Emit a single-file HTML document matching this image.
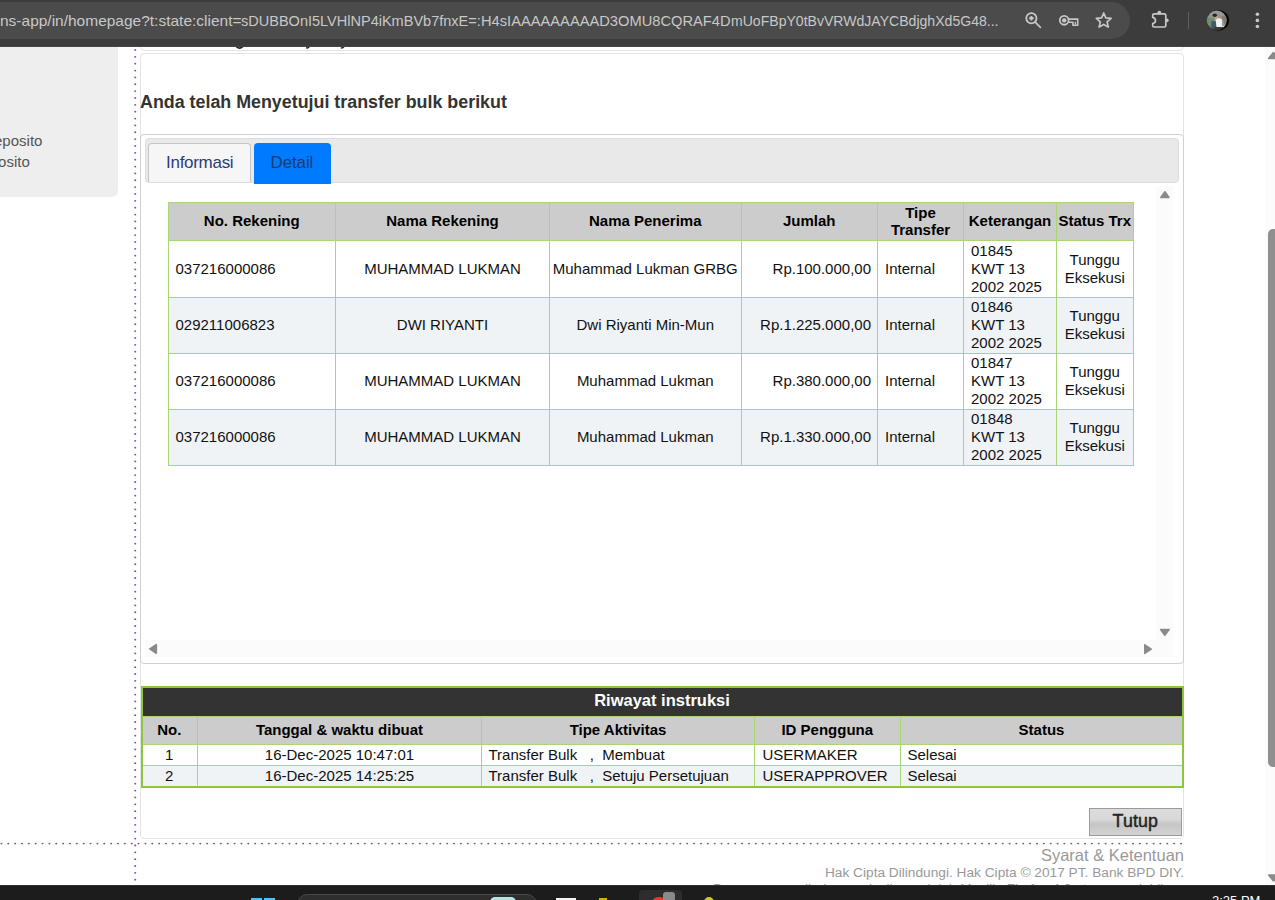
<!DOCTYPE html><html><head><meta charset="utf-8"><style>
*{box-sizing:border-box;margin:0;padding:0}
html,body{width:1275px;height:900px;overflow:hidden;background:#fff;font-family:"Liberation Sans", sans-serif;}
.a{position:absolute}
.t{position:absolute;white-space:pre;font-family:"Liberation Sans", sans-serif;}
.cell{position:absolute;display:flex;align-items:center;white-space:pre;font-size:15px;color:#111;line-height:17.7px}
.hc{font-weight:bold;justify-content:center;text-align:center;color:#000}
.cc{justify-content:center;text-align:center}
.rc{justify-content:flex-end;text-align:right}
</style></head><body>
<div class="a" style="left:0;top:0;width:118px;height:197px;background:#eeeeee;border-bottom-right-radius:6px"></div>
<div class="t" style="right:1232.6px;top:131.5px;font-size:15px;color:#555">eposito</div>
<div class="t" style="right:1245.2px;top:153.3px;font-size:15px;color:#555">posito</div>
<svg class="a" style="left:0;top:0" width="1275" height="900"><g fill="#86519a" rx="1" ry="0.8"><ellipse cx="135.2" cy="49.96" rx="1.05" ry="0.9"/><ellipse cx="135.2" cy="56.82" rx="1.05" ry="0.9"/><ellipse cx="135.2" cy="63.67" rx="1.05" ry="0.9"/><ellipse cx="135.2" cy="70.53" rx="1.05" ry="0.9"/><ellipse cx="135.2" cy="77.39" rx="1.05" ry="0.9"/><ellipse cx="135.2" cy="84.25" rx="1.05" ry="0.9"/><ellipse cx="135.2" cy="91.10" rx="1.05" ry="0.9"/><ellipse cx="135.2" cy="97.96" rx="1.05" ry="0.9"/><ellipse cx="135.2" cy="104.82" rx="1.05" ry="0.9"/><ellipse cx="135.2" cy="111.68" rx="1.05" ry="0.9"/><ellipse cx="135.2" cy="118.53" rx="1.05" ry="0.9"/><ellipse cx="135.2" cy="125.39" rx="1.05" ry="0.9"/><ellipse cx="135.2" cy="132.25" rx="1.05" ry="0.9"/><ellipse cx="135.2" cy="139.11" rx="1.05" ry="0.9"/><ellipse cx="135.2" cy="145.97" rx="1.05" ry="0.9"/><ellipse cx="135.2" cy="152.82" rx="1.05" ry="0.9"/><ellipse cx="135.2" cy="159.68" rx="1.05" ry="0.9"/><ellipse cx="135.2" cy="166.54" rx="1.05" ry="0.9"/><ellipse cx="135.2" cy="173.40" rx="1.05" ry="0.9"/><ellipse cx="135.2" cy="180.25" rx="1.05" ry="0.9"/><ellipse cx="135.2" cy="187.11" rx="1.05" ry="0.9"/><ellipse cx="135.2" cy="193.97" rx="1.05" ry="0.9"/><ellipse cx="135.2" cy="200.83" rx="1.05" ry="0.9"/><ellipse cx="135.2" cy="207.68" rx="1.05" ry="0.9"/><ellipse cx="135.2" cy="214.54" rx="1.05" ry="0.9"/><ellipse cx="135.2" cy="221.40" rx="1.05" ry="0.9"/><ellipse cx="135.2" cy="228.25" rx="1.05" ry="0.9"/><ellipse cx="135.2" cy="235.11" rx="1.05" ry="0.9"/><ellipse cx="135.2" cy="241.97" rx="1.05" ry="0.9"/><ellipse cx="135.2" cy="248.83" rx="1.05" ry="0.9"/><ellipse cx="135.2" cy="255.69" rx="1.05" ry="0.9"/><ellipse cx="135.2" cy="262.54" rx="1.05" ry="0.9"/><ellipse cx="135.2" cy="269.40" rx="1.05" ry="0.9"/><ellipse cx="135.2" cy="276.26" rx="1.05" ry="0.9"/><ellipse cx="135.2" cy="283.12" rx="1.05" ry="0.9"/><ellipse cx="135.2" cy="289.97" rx="1.05" ry="0.9"/><ellipse cx="135.2" cy="296.83" rx="1.05" ry="0.9"/><ellipse cx="135.2" cy="303.69" rx="1.05" ry="0.9"/><ellipse cx="135.2" cy="310.54" rx="1.05" ry="0.9"/><ellipse cx="135.2" cy="317.40" rx="1.05" ry="0.9"/><ellipse cx="135.2" cy="324.26" rx="1.05" ry="0.9"/><ellipse cx="135.2" cy="331.12" rx="1.05" ry="0.9"/><ellipse cx="135.2" cy="337.97" rx="1.05" ry="0.9"/><ellipse cx="135.2" cy="344.83" rx="1.05" ry="0.9"/><ellipse cx="135.2" cy="351.69" rx="1.05" ry="0.9"/><ellipse cx="135.2" cy="358.55" rx="1.05" ry="0.9"/><ellipse cx="135.2" cy="365.40" rx="1.05" ry="0.9"/><ellipse cx="135.2" cy="372.26" rx="1.05" ry="0.9"/><ellipse cx="135.2" cy="379.12" rx="1.05" ry="0.9"/><ellipse cx="135.2" cy="385.98" rx="1.05" ry="0.9"/><ellipse cx="135.2" cy="392.83" rx="1.05" ry="0.9"/><ellipse cx="135.2" cy="399.69" rx="1.05" ry="0.9"/><ellipse cx="135.2" cy="406.55" rx="1.05" ry="0.9"/><ellipse cx="135.2" cy="413.41" rx="1.05" ry="0.9"/><ellipse cx="135.2" cy="420.26" rx="1.05" ry="0.9"/><ellipse cx="135.2" cy="427.12" rx="1.05" ry="0.9"/><ellipse cx="135.2" cy="433.98" rx="1.05" ry="0.9"/><ellipse cx="135.2" cy="440.84" rx="1.05" ry="0.9"/><ellipse cx="135.2" cy="447.69" rx="1.05" ry="0.9"/><ellipse cx="135.2" cy="454.55" rx="1.05" ry="0.9"/><ellipse cx="135.2" cy="461.41" rx="1.05" ry="0.9"/><ellipse cx="135.2" cy="468.27" rx="1.05" ry="0.9"/><ellipse cx="135.2" cy="475.12" rx="1.05" ry="0.9"/><ellipse cx="135.2" cy="481.98" rx="1.05" ry="0.9"/><ellipse cx="135.2" cy="488.84" rx="1.05" ry="0.9"/><ellipse cx="135.2" cy="495.70" rx="1.05" ry="0.9"/><ellipse cx="135.2" cy="502.55" rx="1.05" ry="0.9"/><ellipse cx="135.2" cy="509.41" rx="1.05" ry="0.9"/><ellipse cx="135.2" cy="516.27" rx="1.05" ry="0.9"/><ellipse cx="135.2" cy="523.13" rx="1.05" ry="0.9"/><ellipse cx="135.2" cy="529.99" rx="1.05" ry="0.9"/><ellipse cx="135.2" cy="536.84" rx="1.05" ry="0.9"/><ellipse cx="135.2" cy="543.70" rx="1.05" ry="0.9"/><ellipse cx="135.2" cy="550.56" rx="1.05" ry="0.9"/><ellipse cx="135.2" cy="557.41" rx="1.05" ry="0.9"/><ellipse cx="135.2" cy="564.27" rx="1.05" ry="0.9"/><ellipse cx="135.2" cy="571.13" rx="1.05" ry="0.9"/><ellipse cx="135.2" cy="577.99" rx="1.05" ry="0.9"/><ellipse cx="135.2" cy="584.85" rx="1.05" ry="0.9"/><ellipse cx="135.2" cy="591.70" rx="1.05" ry="0.9"/><ellipse cx="135.2" cy="598.56" rx="1.05" ry="0.9"/><ellipse cx="135.2" cy="605.42" rx="1.05" ry="0.9"/><ellipse cx="135.2" cy="612.27" rx="1.05" ry="0.9"/><ellipse cx="135.2" cy="619.13" rx="1.05" ry="0.9"/><ellipse cx="135.2" cy="625.99" rx="1.05" ry="0.9"/><ellipse cx="135.2" cy="632.85" rx="1.05" ry="0.9"/><ellipse cx="135.2" cy="639.71" rx="1.05" ry="0.9"/><ellipse cx="135.2" cy="646.56" rx="1.05" ry="0.9"/><ellipse cx="135.2" cy="653.42" rx="1.05" ry="0.9"/><ellipse cx="135.2" cy="660.28" rx="1.05" ry="0.9"/><ellipse cx="135.2" cy="667.13" rx="1.05" ry="0.9"/><ellipse cx="135.2" cy="673.99" rx="1.05" ry="0.9"/><ellipse cx="135.2" cy="680.85" rx="1.05" ry="0.9"/><ellipse cx="135.2" cy="687.71" rx="1.05" ry="0.9"/><ellipse cx="135.2" cy="694.57" rx="1.05" ry="0.9"/><ellipse cx="135.2" cy="701.42" rx="1.05" ry="0.9"/><ellipse cx="135.2" cy="708.28" rx="1.05" ry="0.9"/><ellipse cx="135.2" cy="715.14" rx="1.05" ry="0.9"/><ellipse cx="135.2" cy="722.00" rx="1.05" ry="0.9"/><ellipse cx="135.2" cy="728.85" rx="1.05" ry="0.9"/><ellipse cx="135.2" cy="735.71" rx="1.05" ry="0.9"/><ellipse cx="135.2" cy="742.57" rx="1.05" ry="0.9"/><ellipse cx="135.2" cy="749.43" rx="1.05" ry="0.9"/><ellipse cx="135.2" cy="756.28" rx="1.05" ry="0.9"/><ellipse cx="135.2" cy="763.14" rx="1.05" ry="0.9"/><ellipse cx="135.2" cy="770.00" rx="1.05" ry="0.9"/><ellipse cx="135.2" cy="776.86" rx="1.05" ry="0.9"/><ellipse cx="135.2" cy="783.71" rx="1.05" ry="0.9"/><ellipse cx="135.2" cy="790.57" rx="1.05" ry="0.9"/><ellipse cx="135.2" cy="797.43" rx="1.05" ry="0.9"/><ellipse cx="135.2" cy="804.29" rx="1.05" ry="0.9"/><ellipse cx="135.2" cy="811.14" rx="1.05" ry="0.9"/><ellipse cx="135.2" cy="818.00" rx="1.05" ry="0.9"/><ellipse cx="135.2" cy="824.86" rx="1.05" ry="0.9"/><ellipse cx="135.2" cy="831.72" rx="1.05" ry="0.9"/><ellipse cx="135.2" cy="838.57" rx="1.05" ry="0.9"/><ellipse cx="135.2" cy="845.43" rx="1.05" ry="0.9"/><ellipse cx="135.2" cy="852.29" rx="1.05" ry="0.9"/><ellipse cx="135.2" cy="859.14" rx="1.05" ry="0.9"/><ellipse cx="135.2" cy="866.00" rx="1.05" ry="0.9"/><ellipse cx="135.2" cy="872.86" rx="1.05" ry="0.9"/><ellipse cx="135.2" cy="879.72" rx="1.05" ry="0.9"/><ellipse cx="1.41" cy="843.6" rx="1.1" ry="0.8"/><ellipse cx="8.27" cy="843.6" rx="1.1" ry="0.8"/><ellipse cx="15.13" cy="843.6" rx="1.1" ry="0.8"/><ellipse cx="21.98" cy="843.6" rx="1.1" ry="0.8"/><ellipse cx="28.84" cy="843.6" rx="1.1" ry="0.8"/><ellipse cx="35.70" cy="843.6" rx="1.1" ry="0.8"/><ellipse cx="42.56" cy="843.6" rx="1.1" ry="0.8"/><ellipse cx="49.42" cy="843.6" rx="1.1" ry="0.8"/><ellipse cx="56.27" cy="843.6" rx="1.1" ry="0.8"/><ellipse cx="63.13" cy="843.6" rx="1.1" ry="0.8"/><ellipse cx="69.99" cy="843.6" rx="1.1" ry="0.8"/><ellipse cx="76.85" cy="843.6" rx="1.1" ry="0.8"/><ellipse cx="83.71" cy="843.6" rx="1.1" ry="0.8"/><ellipse cx="90.56" cy="843.6" rx="1.1" ry="0.8"/><ellipse cx="97.42" cy="843.6" rx="1.1" ry="0.8"/><ellipse cx="104.28" cy="843.6" rx="1.1" ry="0.8"/><ellipse cx="111.14" cy="843.6" rx="1.1" ry="0.8"/><ellipse cx="118.00" cy="843.6" rx="1.1" ry="0.8"/><ellipse cx="124.85" cy="843.6" rx="1.1" ry="0.8"/><ellipse cx="131.71" cy="843.6" rx="1.1" ry="0.8"/><ellipse cx="138.57" cy="843.6" rx="1.1" ry="0.8"/><ellipse cx="145.43" cy="843.6" rx="1.1" ry="0.8"/><ellipse cx="152.29" cy="843.6" rx="1.1" ry="0.8"/><ellipse cx="159.14" cy="843.6" rx="1.1" ry="0.8"/><ellipse cx="166.00" cy="843.6" rx="1.1" ry="0.8"/><ellipse cx="172.86" cy="843.6" rx="1.1" ry="0.8"/><ellipse cx="179.72" cy="843.6" rx="1.1" ry="0.8"/><ellipse cx="186.58" cy="843.6" rx="1.1" ry="0.8"/><ellipse cx="193.43" cy="843.6" rx="1.1" ry="0.8"/><ellipse cx="200.29" cy="843.6" rx="1.1" ry="0.8"/><ellipse cx="207.15" cy="843.6" rx="1.1" ry="0.8"/><ellipse cx="214.01" cy="843.6" rx="1.1" ry="0.8"/><ellipse cx="220.87" cy="843.6" rx="1.1" ry="0.8"/><ellipse cx="227.72" cy="843.6" rx="1.1" ry="0.8"/><ellipse cx="234.58" cy="843.6" rx="1.1" ry="0.8"/><ellipse cx="241.44" cy="843.6" rx="1.1" ry="0.8"/><ellipse cx="248.30" cy="843.6" rx="1.1" ry="0.8"/><ellipse cx="255.16" cy="843.6" rx="1.1" ry="0.8"/><ellipse cx="262.01" cy="843.6" rx="1.1" ry="0.8"/><ellipse cx="268.87" cy="843.6" rx="1.1" ry="0.8"/><ellipse cx="275.73" cy="843.6" rx="1.1" ry="0.8"/><ellipse cx="282.59" cy="843.6" rx="1.1" ry="0.8"/><ellipse cx="289.45" cy="843.6" rx="1.1" ry="0.8"/><ellipse cx="296.30" cy="843.6" rx="1.1" ry="0.8"/><ellipse cx="303.16" cy="843.6" rx="1.1" ry="0.8"/><ellipse cx="310.02" cy="843.6" rx="1.1" ry="0.8"/><ellipse cx="316.88" cy="843.6" rx="1.1" ry="0.8"/><ellipse cx="323.74" cy="843.6" rx="1.1" ry="0.8"/><ellipse cx="330.59" cy="843.6" rx="1.1" ry="0.8"/><ellipse cx="337.45" cy="843.6" rx="1.1" ry="0.8"/><ellipse cx="344.31" cy="843.6" rx="1.1" ry="0.8"/><ellipse cx="351.17" cy="843.6" rx="1.1" ry="0.8"/><ellipse cx="358.03" cy="843.6" rx="1.1" ry="0.8"/><ellipse cx="364.88" cy="843.6" rx="1.1" ry="0.8"/><ellipse cx="371.74" cy="843.6" rx="1.1" ry="0.8"/><ellipse cx="378.60" cy="843.6" rx="1.1" ry="0.8"/><ellipse cx="385.46" cy="843.6" rx="1.1" ry="0.8"/><ellipse cx="392.32" cy="843.6" rx="1.1" ry="0.8"/><ellipse cx="399.17" cy="843.6" rx="1.1" ry="0.8"/><ellipse cx="406.03" cy="843.6" rx="1.1" ry="0.8"/><ellipse cx="412.89" cy="843.6" rx="1.1" ry="0.8"/><ellipse cx="419.75" cy="843.6" rx="1.1" ry="0.8"/><ellipse cx="426.61" cy="843.6" rx="1.1" ry="0.8"/><ellipse cx="433.46" cy="843.6" rx="1.1" ry="0.8"/><ellipse cx="440.32" cy="843.6" rx="1.1" ry="0.8"/><ellipse cx="447.18" cy="843.6" rx="1.1" ry="0.8"/><ellipse cx="454.04" cy="843.6" rx="1.1" ry="0.8"/><ellipse cx="460.90" cy="843.6" rx="1.1" ry="0.8"/><ellipse cx="467.75" cy="843.6" rx="1.1" ry="0.8"/><ellipse cx="474.61" cy="843.6" rx="1.1" ry="0.8"/><ellipse cx="481.47" cy="843.6" rx="1.1" ry="0.8"/><ellipse cx="488.33" cy="843.6" rx="1.1" ry="0.8"/><ellipse cx="495.19" cy="843.6" rx="1.1" ry="0.8"/><ellipse cx="502.04" cy="843.6" rx="1.1" ry="0.8"/><ellipse cx="508.90" cy="843.6" rx="1.1" ry="0.8"/><ellipse cx="515.76" cy="843.6" rx="1.1" ry="0.8"/><ellipse cx="522.62" cy="843.6" rx="1.1" ry="0.8"/><ellipse cx="529.48" cy="843.6" rx="1.1" ry="0.8"/><ellipse cx="536.33" cy="843.6" rx="1.1" ry="0.8"/><ellipse cx="543.19" cy="843.6" rx="1.1" ry="0.8"/><ellipse cx="550.05" cy="843.6" rx="1.1" ry="0.8"/><ellipse cx="556.91" cy="843.6" rx="1.1" ry="0.8"/><ellipse cx="563.77" cy="843.6" rx="1.1" ry="0.8"/><ellipse cx="570.62" cy="843.6" rx="1.1" ry="0.8"/><ellipse cx="577.48" cy="843.6" rx="1.1" ry="0.8"/><ellipse cx="584.34" cy="843.6" rx="1.1" ry="0.8"/><ellipse cx="591.20" cy="843.6" rx="1.1" ry="0.8"/><ellipse cx="598.06" cy="843.6" rx="1.1" ry="0.8"/><ellipse cx="604.91" cy="843.6" rx="1.1" ry="0.8"/><ellipse cx="611.77" cy="843.6" rx="1.1" ry="0.8"/><ellipse cx="618.63" cy="843.6" rx="1.1" ry="0.8"/><ellipse cx="625.49" cy="843.6" rx="1.1" ry="0.8"/><ellipse cx="632.35" cy="843.6" rx="1.1" ry="0.8"/><ellipse cx="639.20" cy="843.6" rx="1.1" ry="0.8"/><ellipse cx="646.06" cy="843.6" rx="1.1" ry="0.8"/><ellipse cx="652.92" cy="843.6" rx="1.1" ry="0.8"/><ellipse cx="659.78" cy="843.6" rx="1.1" ry="0.8"/><ellipse cx="666.64" cy="843.6" rx="1.1" ry="0.8"/><ellipse cx="673.49" cy="843.6" rx="1.1" ry="0.8"/><ellipse cx="680.35" cy="843.6" rx="1.1" ry="0.8"/><ellipse cx="687.21" cy="843.6" rx="1.1" ry="0.8"/><ellipse cx="694.07" cy="843.6" rx="1.1" ry="0.8"/><ellipse cx="700.93" cy="843.6" rx="1.1" ry="0.8"/><ellipse cx="707.78" cy="843.6" rx="1.1" ry="0.8"/><ellipse cx="714.64" cy="843.6" rx="1.1" ry="0.8"/><ellipse cx="721.50" cy="843.6" rx="1.1" ry="0.8"/><ellipse cx="728.36" cy="843.6" rx="1.1" ry="0.8"/><ellipse cx="735.22" cy="843.6" rx="1.1" ry="0.8"/><ellipse cx="742.07" cy="843.6" rx="1.1" ry="0.8"/><ellipse cx="748.93" cy="843.6" rx="1.1" ry="0.8"/><ellipse cx="755.79" cy="843.6" rx="1.1" ry="0.8"/><ellipse cx="762.65" cy="843.6" rx="1.1" ry="0.8"/><ellipse cx="769.51" cy="843.6" rx="1.1" ry="0.8"/><ellipse cx="776.36" cy="843.6" rx="1.1" ry="0.8"/><ellipse cx="783.22" cy="843.6" rx="1.1" ry="0.8"/><ellipse cx="790.08" cy="843.6" rx="1.1" ry="0.8"/><ellipse cx="796.94" cy="843.6" rx="1.1" ry="0.8"/><ellipse cx="803.80" cy="843.6" rx="1.1" ry="0.8"/><ellipse cx="810.65" cy="843.6" rx="1.1" ry="0.8"/><ellipse cx="817.51" cy="843.6" rx="1.1" ry="0.8"/><ellipse cx="824.37" cy="843.6" rx="1.1" ry="0.8"/><ellipse cx="831.23" cy="843.6" rx="1.1" ry="0.8"/><ellipse cx="838.09" cy="843.6" rx="1.1" ry="0.8"/><ellipse cx="844.94" cy="843.6" rx="1.1" ry="0.8"/><ellipse cx="851.80" cy="843.6" rx="1.1" ry="0.8"/><ellipse cx="858.66" cy="843.6" rx="1.1" ry="0.8"/><ellipse cx="865.52" cy="843.6" rx="1.1" ry="0.8"/><ellipse cx="872.38" cy="843.6" rx="1.1" ry="0.8"/><ellipse cx="879.23" cy="843.6" rx="1.1" ry="0.8"/><ellipse cx="886.09" cy="843.6" rx="1.1" ry="0.8"/><ellipse cx="892.95" cy="843.6" rx="1.1" ry="0.8"/><ellipse cx="899.81" cy="843.6" rx="1.1" ry="0.8"/><ellipse cx="906.67" cy="843.6" rx="1.1" ry="0.8"/><ellipse cx="913.52" cy="843.6" rx="1.1" ry="0.8"/><ellipse cx="920.38" cy="843.6" rx="1.1" ry="0.8"/><ellipse cx="927.24" cy="843.6" rx="1.1" ry="0.8"/><ellipse cx="934.10" cy="843.6" rx="1.1" ry="0.8"/><ellipse cx="940.96" cy="843.6" rx="1.1" ry="0.8"/><ellipse cx="947.81" cy="843.6" rx="1.1" ry="0.8"/><ellipse cx="954.67" cy="843.6" rx="1.1" ry="0.8"/><ellipse cx="961.53" cy="843.6" rx="1.1" ry="0.8"/><ellipse cx="968.39" cy="843.6" rx="1.1" ry="0.8"/><ellipse cx="975.25" cy="843.6" rx="1.1" ry="0.8"/><ellipse cx="982.10" cy="843.6" rx="1.1" ry="0.8"/><ellipse cx="988.96" cy="843.6" rx="1.1" ry="0.8"/><ellipse cx="995.82" cy="843.6" rx="1.1" ry="0.8"/><ellipse cx="1002.68" cy="843.6" rx="1.1" ry="0.8"/><ellipse cx="1009.54" cy="843.6" rx="1.1" ry="0.8"/><ellipse cx="1016.39" cy="843.6" rx="1.1" ry="0.8"/><ellipse cx="1023.25" cy="843.6" rx="1.1" ry="0.8"/><ellipse cx="1030.11" cy="843.6" rx="1.1" ry="0.8"/><ellipse cx="1036.97" cy="843.6" rx="1.1" ry="0.8"/><ellipse cx="1043.83" cy="843.6" rx="1.1" ry="0.8"/><ellipse cx="1050.68" cy="843.6" rx="1.1" ry="0.8"/><ellipse cx="1057.54" cy="843.6" rx="1.1" ry="0.8"/><ellipse cx="1064.40" cy="843.6" rx="1.1" ry="0.8"/><ellipse cx="1071.26" cy="843.6" rx="1.1" ry="0.8"/><ellipse cx="1078.12" cy="843.6" rx="1.1" ry="0.8"/><ellipse cx="1084.97" cy="843.6" rx="1.1" ry="0.8"/><ellipse cx="1091.83" cy="843.6" rx="1.1" ry="0.8"/><ellipse cx="1098.69" cy="843.6" rx="1.1" ry="0.8"/><ellipse cx="1105.55" cy="843.6" rx="1.1" ry="0.8"/><ellipse cx="1112.41" cy="843.6" rx="1.1" ry="0.8"/><ellipse cx="1119.26" cy="843.6" rx="1.1" ry="0.8"/><ellipse cx="1126.12" cy="843.6" rx="1.1" ry="0.8"/><ellipse cx="1132.98" cy="843.6" rx="1.1" ry="0.8"/><ellipse cx="1139.84" cy="843.6" rx="1.1" ry="0.8"/><ellipse cx="1146.70" cy="843.6" rx="1.1" ry="0.8"/><ellipse cx="1153.55" cy="843.6" rx="1.1" ry="0.8"/><ellipse cx="1160.41" cy="843.6" rx="1.1" ry="0.8"/><ellipse cx="1167.27" cy="843.6" rx="1.1" ry="0.8"/><ellipse cx="1174.13" cy="843.6" rx="1.1" ry="0.8"/><ellipse cx="1180.99" cy="843.6" rx="1.1" ry="0.8"/></g></svg>
<div class="a" style="left:140px;top:0;width:1044px;height:51px;border:1px solid #e3e3e3;border-radius:0 0 5px 5px"></div>
<svg class="a" style="left:0;top:0" width="400" height="52"><path d="M236.4 46.6 Q239.5 49.6 242.8 46.6" fill="none" stroke="#222" stroke-width="1.6"/><path d="M306 47.6 Q307.8 48.6 309.2 46.8" fill="none" stroke="#222" stroke-width="1.4"/><path d="M340.8 47.6 Q342.4 48.6 343.9 46.8" fill="none" stroke="#222" stroke-width="1.4"/></svg>
<div class="a" style="left:140px;top:53px;width:1044px;height:786px;border:1px solid #e3e3e3;border-radius:4px"></div>
<div class="t" style="left:140px;top:92.1px;font-size:17.85px;font-weight:bold;color:#333">Anda telah Menyetujui transfer bulk berikut</div>
<div class="a" style="left:140px;top:134px;width:1044px;height:530px;border:1px solid #d0d0d0;border-radius:4px"></div>
<div class="a" style="left:145px;top:138px;width:1034px;height:45px;border:1px solid #dddddd;background:#e9e9e9;border-radius:4px"></div>
<div class="a" style="left:148px;top:143px;width:103px;height:39px;border:1px solid #c5c5c5;border-bottom:none;background:#f6f6f6;border-radius:4px 4px 0 0"></div>
<div class="t" style="left:166.1px;top:153px;font-size:17px;letter-spacing:-0.3px;color:#2c3e78">Informasi</div>
<div class="a" style="left:254px;top:143px;width:77px;height:41px;background:#007bff;border-radius:4px 4px 0 0"></div>
<div class="t" style="left:270.6px;top:153px;font-size:17px;letter-spacing:-0.15px;color:#1d3a70">Detail</div>
<div class="a" style="left:1156px;top:186px;width:17px;height:471px;background:#fbfbfb"></div>
<div class="a" style="left:145px;top:640px;width:1028px;height:17px;background:#fbfbfb"></div>
<svg class="a" style="left:0;top:0" width="1275" height="900"><g fill="#8a8a8a" stroke="#8a8a8a" stroke-width="1.6" stroke-linejoin="round"><path d="M1164.9 191.8 L1169 197.4 L1160.8 197.4 Z"/><path d="M1160.6 629.5 L1169.1 629.5 L1164.85 635.2 Z"/><path d="M149.8 648.9 L156.3 644.6 L156.3 653.3 Z"/><path d="M1151.2 649.1 L1144.8 644.8 L1144.8 653.4 Z"/></g></svg>
<div class="a" style="left:168px;top:202px;width:965px;height:38.5px;background:#cccccc"></div>
<div class="a" style="left:168px;top:240.5px;width:965px;height:56.5px;background:#ffffff"></div>
<div class="a" style="left:168px;top:297px;width:965px;height:56px;background:#f0f3f6"></div>
<div class="a" style="left:168px;top:353px;width:965px;height:56px;background:#ffffff"></div>
<div class="a" style="left:168px;top:409px;width:965px;height:56px;background:#f0f3f6"></div>
<div class="a" style="left:168px;top:201.5px;width:966px;height:1px;background:#a8d672"></div>
<div class="a" style="left:168px;top:240.0px;width:966px;height:1px;background:#a8d672"></div>
<div class="a" style="left:168px;top:296.5px;width:966px;height:1px;background:#a8d672"></div>
<div class="a" style="left:168px;top:352.5px;width:966px;height:1px;background:#a8d672"></div>
<div class="a" style="left:168px;top:408.5px;width:966px;height:1px;background:#a8d672"></div>
<div class="a" style="left:168px;top:464.5px;width:966px;height:1px;background:#a8d672"></div>
<div class="a" style="left:167.5px;top:202px;width:1px;height:263px;background:#a8d672"></div>
<div class="a" style="left:335.0px;top:202px;width:1px;height:263px;background:#a8d672"></div>
<div class="a" style="left:549.0px;top:202px;width:1px;height:263px;background:#a8d672"></div>
<div class="a" style="left:740.5px;top:202px;width:1px;height:263px;background:#a8d672"></div>
<div class="a" style="left:877.0px;top:202px;width:1px;height:263px;background:#a8d672"></div>
<div class="a" style="left:963.0px;top:202px;width:1px;height:263px;background:#a8d672"></div>
<div class="a" style="left:1056.0px;top:202px;width:1px;height:263px;background:#a8d672"></div>
<div class="a" style="left:1132.5px;top:202px;width:1px;height:263px;background:#a8d672"></div>
<div class="cell hc" style="left:168px;top:202px;width:167.5px;height:38.5px">No. Rekening</div>
<div class="cell hc" style="left:335.5px;top:202px;width:214.0px;height:38.5px">Nama Rekening</div>
<div class="cell hc" style="left:549.5px;top:202px;width:191.5px;height:38.5px">Nama Penerima</div>
<div class="cell hc" style="left:741px;top:202px;width:136.5px;height:38.5px">Jumlah</div>
<div class="cell hc" style="left:877.5px;top:202px;width:86.0px;height:38.5px">Tipe
Transfer</div>
<div class="cell hc" style="left:963.5px;top:202px;width:93.0px;height:38.5px">Keterangan</div>
<div class="cell hc" style="left:1056.5px;top:202px;width:76.5px;height:38.5px">Status Trx</div>
<div class="cell " style="left:168px;top:240.5px;width:167.5px;height:56.5px;padding-left:7.5px">037216000086</div>
<div class="cell cc" style="left:335.5px;top:240.5px;width:214.0px;height:56.5px;">MUHAMMAD LUKMAN</div>
<div class="cell cc" style="left:549.5px;top:240.5px;width:191.5px;height:56.5px;">Muhammad Lukman GRBG</div>
<div class="cell rc" style="left:741px;top:240.5px;width:136.5px;height:56.5px;padding-right:6.5px">Rp.100.000,00</div>
<div class="cell " style="left:877.5px;top:240.5px;width:86.0px;height:56.5px;padding-left:7.5px">Internal</div>
<div class="cell " style="left:963.5px;top:240.5px;width:93.0px;height:56.5px;padding-left:7.5px">01845
KWT 13
2002 2025</div>
<div class="cell cc" style="left:1056.5px;top:240.5px;width:76.5px;height:56.5px;">Tunggu
Eksekusi</div>
<div class="cell " style="left:168px;top:297px;width:167.5px;height:56px;padding-left:7.5px">029211006823</div>
<div class="cell cc" style="left:335.5px;top:297px;width:214.0px;height:56px;">DWI RIYANTI</div>
<div class="cell cc" style="left:549.5px;top:297px;width:191.5px;height:56px;">Dwi Riyanti Min-Mun</div>
<div class="cell rc" style="left:741px;top:297px;width:136.5px;height:56px;padding-right:6.5px">Rp.1.225.000,00</div>
<div class="cell " style="left:877.5px;top:297px;width:86.0px;height:56px;padding-left:7.5px">Internal</div>
<div class="cell " style="left:963.5px;top:297px;width:93.0px;height:56px;padding-left:7.5px">01846
KWT 13
2002 2025</div>
<div class="cell cc" style="left:1056.5px;top:297px;width:76.5px;height:56px;">Tunggu
Eksekusi</div>
<div class="cell " style="left:168px;top:353px;width:167.5px;height:56px;padding-left:7.5px">037216000086</div>
<div class="cell cc" style="left:335.5px;top:353px;width:214.0px;height:56px;">MUHAMMAD LUKMAN</div>
<div class="cell cc" style="left:549.5px;top:353px;width:191.5px;height:56px;">Muhammad Lukman</div>
<div class="cell rc" style="left:741px;top:353px;width:136.5px;height:56px;padding-right:6.5px">Rp.380.000,00</div>
<div class="cell " style="left:877.5px;top:353px;width:86.0px;height:56px;padding-left:7.5px">Internal</div>
<div class="cell " style="left:963.5px;top:353px;width:93.0px;height:56px;padding-left:7.5px">01847
KWT 13
2002 2025</div>
<div class="cell cc" style="left:1056.5px;top:353px;width:76.5px;height:56px;">Tunggu
Eksekusi</div>
<div class="cell " style="left:168px;top:409px;width:167.5px;height:56px;padding-left:7.5px">037216000086</div>
<div class="cell cc" style="left:335.5px;top:409px;width:214.0px;height:56px;">MUHAMMAD LUKMAN</div>
<div class="cell cc" style="left:549.5px;top:409px;width:191.5px;height:56px;">Muhammad Lukman</div>
<div class="cell rc" style="left:741px;top:409px;width:136.5px;height:56px;padding-right:6.5px">Rp.1.330.000,00</div>
<div class="cell " style="left:877.5px;top:409px;width:86.0px;height:56px;padding-left:7.5px">Internal</div>
<div class="cell " style="left:963.5px;top:409px;width:93.0px;height:56px;padding-left:7.5px">01848
KWT 13
2002 2025</div>
<div class="cell cc" style="left:1056.5px;top:409px;width:76.5px;height:56px;">Tunggu
Eksekusi</div>
<div class="a" style="left:141px;top:686px;width:1042px;height:30px;background:#333333"></div>
<div class="a" style="left:141px;top:716px;width:1042px;height:28.5px;background:#cccccc"></div>
<div class="a" style="left:141px;top:744.5px;width:1042px;height:21.0px;background:#ffffff"></div>
<div class="a" style="left:141px;top:765.5px;width:1042px;height:21.0px;background:#f0f3f6"></div>
<div class="a" style="left:141px;top:715.5px;width:1042px;height:1px;background:#a8d672"></div>
<div class="a" style="left:141px;top:744.0px;width:1042px;height:1px;background:#a8d672"></div>
<div class="a" style="left:141px;top:765.0px;width:1042px;height:1px;background:#a8d672"></div>
<div class="a" style="left:197.0px;top:716px;width:1px;height:70.5px;background:#a8d672"></div>
<div class="a" style="left:481.0px;top:716px;width:1px;height:70.5px;background:#a8d672"></div>
<div class="a" style="left:754.0px;top:716px;width:1px;height:70.5px;background:#a8d672"></div>
<div class="a" style="left:899.5px;top:716px;width:1px;height:70.5px;background:#a8d672"></div>
<div class="a" style="left:140.5px;top:686px;width:1043.2px;height:102px;border:2px solid #8cc63e"></div>
<div class="cell hc" style="left:141px;top:686px;width:1042px;height:30px;color:#fff;font-size:16.5px">Riwayat instruksi</div>
<div class="cell hc" style="left:141px;top:716px;width:56.5px;height:28.5px">No.</div>
<div class="cell hc" style="left:197.5px;top:716px;width:284.0px;height:28.5px">Tanggal &amp; waktu dibuat</div>
<div class="cell hc" style="left:481.5px;top:716px;width:273.0px;height:28.5px">Tipe Aktivitas</div>
<div class="cell hc" style="left:754.5px;top:716px;width:145.5px;height:28.5px">ID Pengguna</div>
<div class="cell hc" style="left:900px;top:716px;width:283px;height:28.5px">Status</div>
<div class="cell cc" style="left:141px;top:744.5px;width:56.5px;height:21.0px;">1</div>
<div class="cell cc" style="left:197.5px;top:744.5px;width:284.0px;height:21.0px;">16-Dec-2025 10:47:01</div>
<div class="cell " style="left:481.5px;top:744.5px;width:273.0px;height:21.0px;padding-left:7px">Transfer Bulk   ,  Membuat</div>
<div class="cell " style="left:754.5px;top:744.5px;width:145.5px;height:21.0px;padding-left:8px">USERMAKER</div>
<div class="cell " style="left:900px;top:744.5px;width:283px;height:21.0px;padding-left:7.5px">Selesai</div>
<div class="cell cc" style="left:141px;top:765.5px;width:56.5px;height:21.0px;">2</div>
<div class="cell cc" style="left:197.5px;top:765.5px;width:284.0px;height:21.0px;">16-Dec-2025 14:25:25</div>
<div class="cell " style="left:481.5px;top:765.5px;width:273.0px;height:21.0px;padding-left:7px">Transfer Bulk   ,  Setuju Persetujuan</div>
<div class="cell " style="left:754.5px;top:765.5px;width:145.5px;height:21.0px;padding-left:8px">USERAPPROVER</div>
<div class="cell " style="left:900px;top:765.5px;width:283px;height:21.0px;padding-left:7.5px">Selesai</div>
<div class="a" style="left:1088.5px;top:808px;width:93.5px;height:28px;border:1px solid #9a9a9a;background:linear-gradient(#dcdcdc 0%,#d8d8d8 40%,#c6c6c6 58%,#cbcbcb 75%,#d3d3d3 100%);display:flex;align-items:center;justify-content:center;font-size:17.8px;font-weight:normal;-webkit-text-stroke:0.45px #222;color:#222;padding-left:0px;padding-bottom:2px;letter-spacing:0.1px">Tutup</div>
<div class="t" style="right:91px;top:845.5px;font-size:16.5px;color:#999">Syarat &amp; Ketentuan</div>
<div class="t" style="right:91px;top:865px;font-size:13.7px;color:#999">Hak Cipta Dilindungi. Hak Cipta © 2017 PT. Bank BPD DIY.</div>
<div class="t" style="left:713px;top:880.5px;font-size:13.7px;color:#999">Browser yang direkomendasikan adalah Mozilla Firefox 4.0 atau yang lebih</div>
<div class="a" style="left:1265px;top:47px;width:10px;height:838px;background:#fbfbfb"></div>
<div class="a" style="left:1268px;top:228.5px;width:7px;height:538.5px;background:#8f8f8f;border-radius:5px 0 0 5px"></div>
<svg class="a" style="left:0;top:0" width="1275" height="900"><g fill="#8a8a8a" stroke="#8a8a8a" stroke-width="1.6" stroke-linejoin="round"><path d="M1273.4 52.6 L1278.4 58.4 L1268.6 58.4 Z"/><path d="M1268.7 875 L1278.4 875 L1273.5 881 Z"/></g></svg>
<div class="a" style="left:0;top:0;width:1275px;height:47px;background:#3c3c3c;border-bottom:1px solid #464646"></div>
<div class="a" style="left:-40px;top:1.5px;width:1170px;height:37px;background:#4b4b4b;border-radius:18.5px"></div>
<div class="t" style="left:-0.5px;top:12.7px;font-size:14.8px;color:#c8c8c8;transform-origin:0 0;transform:scaleX(1.0466)">ns-app/in/homepage?t:state:client=</div>
<div class="t" style="left:241.2px;top:12.7px;font-size:14.8px;color:#c8c8c8;transform-origin:0 0;transform:scaleX(0.9812)">sDUBBOnI5LVHlNP4iKmBVb7fnxE=:</div>
<div class="t" style="left:481.0px;top:12.7px;font-size:14.8px;color:#c8c8c8;transform-origin:0 0;transform:scaleX(0.9916)">H4sIAAAAAAAAAD3OMU8CQRAF4D</div>
<div class="t" style="left:730.5px;top:12.7px;font-size:14.8px;color:#c8c8c8;transform-origin:0 0;transform:scaleX(0.9501)">mUoFBpY0tBvVRWdJAYCBdjghXd5G48...</div>
<svg class="a" style="left:0;top:0" width="1275" height="47"><circle cx="1031.4" cy="18.3" r="5.1" fill="none" stroke="#c7c7c7" stroke-width="1.8"/><path d="M1035.2 22.1 L1040.4 27.3" stroke="#c7c7c7" stroke-width="1.7" stroke-linecap="round"/><path d="M1031.4 16 V20.6 M1029.1 18.3 H1033.7" stroke="#c7c7c7" stroke-width="1.9"/></svg>
<svg class="a" style="left:0;top:0" width="1275" height="47"><circle cx="1064.2" cy="20.35" r="4.4" fill="none" stroke="#c7c7c7" stroke-width="1.8"/><circle cx="1064.2" cy="20.35" r="2.2" fill="#c7c7c7"/><path d="M1068.6 19.1 H1077.7 V25.2 H1072.9 V22.3 H1068.6" fill="none" stroke="#c7c7c7" stroke-width="1.6" stroke-linejoin="round"/><path d="M1075.3 21.8 V24.6" stroke="#c7c7c7" stroke-width="1.3"/></svg>
<svg class="a" style="left:0;top:0" width="1275" height="47"><path d="M1103.70 13.00 L1105.82 17.89 L1111.12 18.39 L1107.12 21.91 L1108.28 27.11 L1103.70 24.40 L1099.12 27.11 L1100.28 21.91 L1096.28 18.39 L1101.58 17.89 Z" fill="none" stroke="#c7c7c7" stroke-width="1.7" stroke-linejoin="round"/></svg>
<svg class="a" style="left:0;top:0" width="1275" height="47"><path d="M1154.3 13.8 H1164.3 Q1165.8 13.8 1165.8 15.3 V25.5 Q1165.8 27 1164.3 27 H1154.2 Q1152.7 27 1152.7 25.5 V23.6 Q1155.5 22.9 1155.5 20.5 Q1155.5 18.1 1152.7 17.4 V15.3 Q1152.7 13.8 1154.3 13.8 Z" fill="none" stroke="#c7c7c7" stroke-width="1.7" stroke-linejoin="round"/><circle cx="1159.3" cy="12.6" r="1.9" fill="#c7c7c7"/><circle cx="1166.9" cy="20.4" r="1.8" fill="#c7c7c7"/></svg>
<div class="a" style="left:1187.5px;top:11.5px;width:1.5px;height:17px;background:#5f5f5f"></div>
<svg class="a" style="left:0;top:0" width="1275" height="47"><defs><clipPath id="cp"><ellipse cx="1216.8" cy="20.4" rx="9.9" ry="9.8"/></clipPath><linearGradient id="ag" x1="0" y1="0" x2="0" y2="1"><stop offset="0" stop-color="#9a9ea2"/><stop offset="0.5" stop-color="#8c9088"/><stop offset="1" stop-color="#5a5e58"/></linearGradient></defs><ellipse cx="1218" cy="20.4" rx="11" ry="10.4" fill="#050505"/><g clip-path="url(#cp)"><rect x="1205" y="8" width="24" height="25" fill="url(#ag)"/><path d="M1206 18 Q1210 17 1214 19 L1214 26 L1206 26 Z" fill="#6f8f6c"/><path d="M1211.5 21 L1216.5 21.5 L1217 30 L1211 30 Z" fill="#3d5a72"/><path d="M1215.5 18 Q1220 17.5 1223 20 L1225.5 26.5 L1216.5 27.5 Z" fill="#f0f0f0"/><circle cx="1216.3" cy="17.6" r="1.8" fill="#c9a27e"/><ellipse cx="1214.8" cy="15.2" rx="2.2" ry="1.8" fill="#2a2422"/><rect x="1214" y="27" width="12" height="4" fill="#3b3a32"/><rect x="1222" y="16" width="5" height="10" fill="#7a7468" opacity="0.7"/></g></svg>
<svg class="a" style="left:1250px;top:8px" width="14" height="26"><circle cx="7.4" cy="6.3" r="1.8" fill="#c7c7c7"/><circle cx="7.4" cy="12.4" r="1.8" fill="#c7c7c7"/><circle cx="7.4" cy="18.5" r="1.8" fill="#c7c7c7"/></svg>
<div class="a" style="left:0;top:885px;width:1275px;height:15px;background:#1c1c1c;border-top:1px solid #2e2e2e"></div>
<div class="a" style="left:251px;top:898px;width:11px;height:2px;background:#4cc2ff"></div>
<div class="a" style="left:264px;top:898px;width:11px;height:2px;background:#4cc2ff"></div>
<div class="a" style="left:297px;top:894px;width:240px;height:20px;background:#2e2e2e;border:1px solid #474747;border-radius:10px"></div>
<div class="a" style="left:490px;top:897px;width:26px;height:10px;background:#b8e4e4;border-radius:10px"></div>
<div class="a" style="left:556px;top:898px;width:20px;height:4px;background:#f2f2f2"></div>
<div class="a" style="left:599px;top:898px;width:8px;height:3px;background:#e2a800"></div>
<div class="a" style="left:639px;top:890px;width:43px;height:14px;background:#2d2d2d;border-radius:4px"></div>
<div class="a" style="left:652px;top:897px;width:14px;height:6px;background:#e03a2e;border-radius:7px 7px 0 0"></div>
<div class="a" style="left:663px;top:892px;width:12px;height:10px;background:#8a8a8a;border-radius:3px"></div>
<div class="a" style="left:704px;top:897px;width:10px;height:6px;background:#c8c828;border-radius:5px 5px 0 0"></div>
<div class="t" style="left:1212px;top:893px;font-size:13px;color:#fff">2:25 PM</div>
</body></html>
